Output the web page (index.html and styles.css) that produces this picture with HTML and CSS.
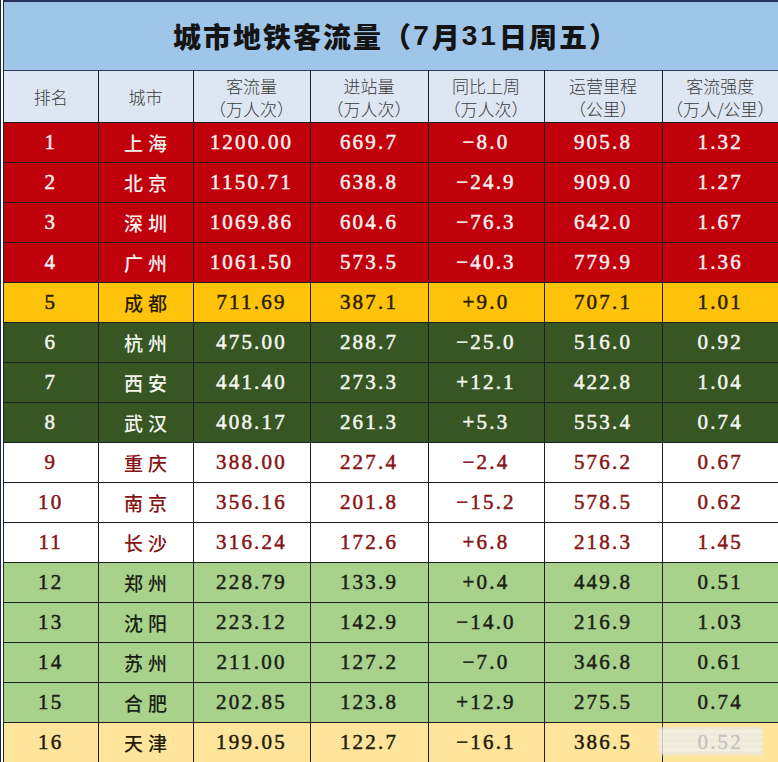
FILE: index.html
```html
<!DOCTYPE html>
<html lang="zh">
<head>
<meta charset="utf-8">
<link rel="stylesheet" href="styles.css">
</head>
<body>
<div class="sheet">
  <div class="title">城市地铁客流量（<span class="tnum">7</span>月<span class="tnum">31</span>日周五）</div>
  <table class="grid">
    <colgroup>
      <col class="c1"><col class="c2"><col class="c3"><col class="c4"><col class="c5"><col class="c6"><col class="c7">
    </colgroup>
    <thead>
      <tr class="head">
        <th>排名</th>
        <th>城市</th>
        <th><span class="hl">客流量</span><span class="hl">（万人次）</span></th>
        <th><span class="hl">进站量</span><span class="hl">（万人次）</span></th>
        <th><span class="hl">同比上周</span><span class="hl">（万人次）</span></th>
        <th><span class="hl">运营里程</span><span class="hl">（公里）</span></th>
        <th><span class="hl">客流强度</span><span class="hl">（万人/公里）</span></th>
      </tr>
    </thead>
    <tbody>
      <tr class="red"><td>1</td><td class="city">上海</td><td>1200.00</td><td>669.7</td><td>−8.0</td><td>905.8</td><td>1.32</td></tr>
      <tr class="red"><td>2</td><td class="city">北京</td><td>1150.71</td><td>638.8</td><td>−24.9</td><td>909.0</td><td>1.27</td></tr>
      <tr class="red"><td>3</td><td class="city">深圳</td><td>1069.86</td><td>604.6</td><td>−76.3</td><td>642.0</td><td>1.67</td></tr>
      <tr class="red"><td>4</td><td class="city">广州</td><td>1061.50</td><td>573.5</td><td>−40.3</td><td>779.9</td><td>1.36</td></tr>
      <tr class="gold"><td>5</td><td class="city">成都</td><td>711.69</td><td>387.1</td><td>+9.0</td><td>707.1</td><td>1.01</td></tr>
      <tr class="dgreen"><td>6</td><td class="city">杭州</td><td>475.00</td><td>288.7</td><td>−25.0</td><td>516.0</td><td>0.92</td></tr>
      <tr class="dgreen"><td>7</td><td class="city">西安</td><td>441.40</td><td>273.3</td><td>+12.1</td><td>422.8</td><td>1.04</td></tr>
      <tr class="dgreen"><td>8</td><td class="city">武汉</td><td>408.17</td><td>261.3</td><td>+5.3</td><td>553.4</td><td>0.74</td></tr>
      <tr class="white"><td>9</td><td class="city">重庆</td><td>388.00</td><td>227.4</td><td>−2.4</td><td>576.2</td><td>0.67</td></tr>
      <tr class="white"><td>10</td><td class="city">南京</td><td>356.16</td><td>201.8</td><td>−15.2</td><td>578.5</td><td>0.62</td></tr>
      <tr class="white"><td>11</td><td class="city">长沙</td><td>316.24</td><td>172.6</td><td>+6.8</td><td>218.3</td><td>1.45</td></tr>
      <tr class="lgreen"><td>12</td><td class="city">郑州</td><td>228.79</td><td>133.9</td><td>+0.4</td><td>449.8</td><td>0.51</td></tr>
      <tr class="lgreen"><td>13</td><td class="city">沈阳</td><td>223.12</td><td>142.9</td><td>−14.0</td><td>216.9</td><td>1.03</td></tr>
      <tr class="lgreen"><td>14</td><td class="city">苏州</td><td>211.00</td><td>127.2</td><td>−7.0</td><td>346.8</td><td>0.61</td></tr>
      <tr class="lgreen"><td>15</td><td class="city">合肥</td><td>202.85</td><td>123.8</td><td>+12.9</td><td>275.5</td><td>0.74</td></tr>
      <tr class="lyellow"><td>16</td><td class="city">天津</td><td>199.05</td><td>122.7</td><td>−16.1</td><td>386.5</td><td class="wm-cell">0.52<span class="wm"></span></td></tr>
    </tbody>
  </table>
</div>
</body>
</html>
```

FILE: styles.css
```css
html, body {
  margin: 0;
  padding: 0;
  background: #ffffff;
}

.sheet {
  width: 778px;
  height: 762px;
  overflow: hidden;
  border-left: 4px double #1c2540;
  box-sizing: border-box;
}

.title {
  height: 70px;
  background: #9fc5e8;
  border-top: 2px solid #26335a;
  box-sizing: border-box;
  display: flex;
  align-items: center;
  justify-content: center;
  padding-left: 10px;
  font-family: "Noto Sans CJK SC", "Noto Sans CJK JP", sans-serif;
  font-weight: 900;
  font-size: 28px;
  letter-spacing: 2px;
  color: #141414;
}

.tnum {
  font-family: "Liberation Sans", sans-serif;
  font-weight: 700;
  letter-spacing: 3px;
}

.grid {
  border-collapse: collapse;
  table-layout: fixed;
  width: 774px;
}

.c1 { width: 94px; }
.c2 { width: 95px; }
.c3 { width: 117px; }
.c4 { width: 118px; }
.c5 { width: 116px; }
.c6 { width: 118px; }
.c7 { width: 116px; }

.grid th,
.grid td {
  border: 1px solid #1e1e1e;
  text-align: center;
  padding: 0;
}

.grid tr > :first-child { border-left: none; }
.grid tr > :last-child { border-right: none; }

.head th {
  height: 51px;
  background: #dde7f3;
  font-family: "Noto Sans CJK SC", "Noto Sans CJK JP", sans-serif;
  font-weight: 300;
  font-size: 17px;
  line-height: 23px;
  color: #3a3a3a;
  border-top: 1px solid #2a3a60;
}

.hl {
  display: block;
  height: 23px;
  overflow: visible;
  white-space: nowrap;
}

.grid td {
  height: 39px;
  font-family: "Liberation Serif", "Noto Sans CJK SC", serif;
  font-weight: 400;
  font-size: 21px;
  letter-spacing: 2.2px;
  -webkit-text-stroke: 0.5px currentColor;
}

.grid td.city {
  font-family: "Noto Sans CJK SC", "Noto Sans CJK JP", sans-serif;
  font-weight: 500;
  font-size: 19px;
  letter-spacing: 5px;
  padding-left: 5px;
  -webkit-text-stroke: 0;
}

.red td { background: #c0000b; color: #fbeeee; }
.gold td { background: #fec30a; color: #2a1c00; }
.dgreen td { background: #375623; color: #f4f6f0; }
.white td { background: #ffffff; color: #861414; }
.lgreen td { background: #a8d18c; color: #1b1f14; }
.lyellow td { background: #ffe59b; color: #241c08; }

.wm-cell {
  position: relative;
}

.wm {
  position: absolute;
  left: -4px;
  top: 4px;
  width: 104px;
  height: 28px;
  background: repeating-linear-gradient(180deg, rgba(225,225,225,0.85) 0 3px, rgba(250,250,250,0.75) 3px 6px);
  filter: blur(1.5px);
}
```
